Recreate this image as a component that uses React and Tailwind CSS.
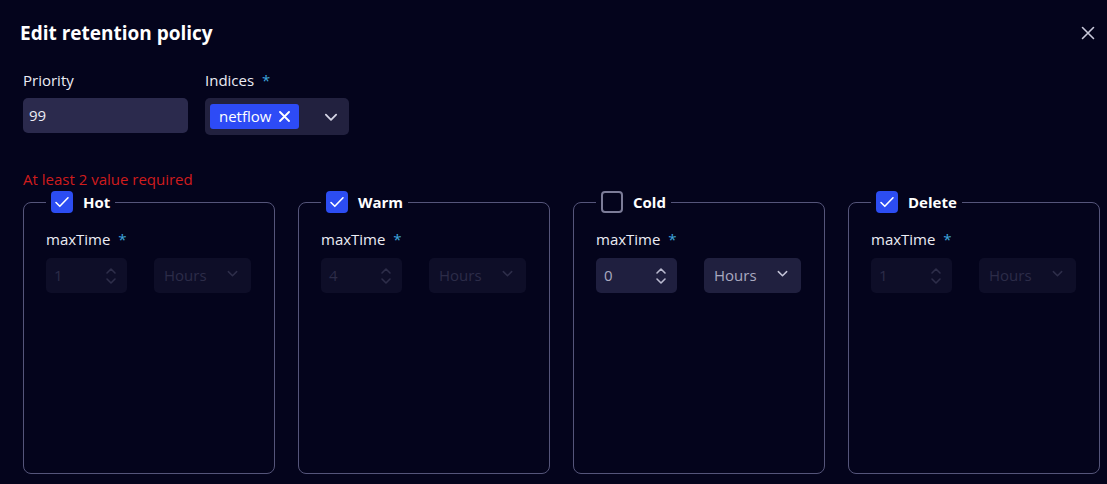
import React from "react";

const font = { fontFamily: "'Open Sans', 'Noto Sans', sans-serif" };

function Check({ checked }) {
  if (checked) {
    return (
      <span className="flex h-[22px] w-[22px] items-center justify-center rounded-[4px] bg-[#2c4df2]">
        <svg width="18" height="18" viewBox="0 0 18 18" fill="none">
          <path d="M3 9.5l3.8 3.8L15 4.8" stroke="white" strokeWidth="1.6" strokeLinecap="round" strokeLinejoin="round" />
        </svg>
      </span>
    );
  }
  return <span className="block h-[22px] w-[22px] rounded-[4px] border-2 border-[#7c7c98]" />;
}

function Spinner({ color }) {
  return (
    <svg width="12" height="22" viewBox="0 0 12 22" fill="none">
      <path d="M2 8l4-4 4 4" stroke={color} strokeWidth="1.6" strokeLinecap="round" strokeLinejoin="round" />
      <path d="M2 14l4 4 4-4" stroke={color} strokeWidth="1.6" strokeLinecap="round" strokeLinejoin="round" />
    </svg>
  );
}

function Chevron({ color, size = 14 }) {
  return (
    <svg width={size} height={size} viewBox="0 0 14 14" fill="none">
      <path d="M2.5 5l4.5 4.5L11.5 5" stroke={color} strokeWidth="1.6" strokeLinecap="round" strokeLinejoin="round" />
    </svg>
  );
}

function Phase({ name, checked, value }) {
  const active = !checked;
  return (
    <fieldset className="h-[283px] rounded-lg border border-[#55557a] px-[22px]">
      <legend className="flex items-center gap-[10px] px-[5px]">
        <Check checked={checked} />
        <span className="text-[15px] font-bold text-white leading-[22px]">{name}</span>
      </legend>
      <div className="mt-[17px] text-[15px] leading-[18px] text-[#ececf4]">
        maxTime <span className="ml-1 text-[#3ea5dc]">*</span>
      </div>
      <div className="mt-[10px] flex gap-[27px]">
        <div
          className={`flex h-[35px] w-[81px] items-center justify-between rounded-[5px] pl-[8px] pr-[10px] text-[15px] ${
            active ? "bg-[#1f1f3f] text-[#a9a9c0]" : "bg-[#0e0e28] text-[#2c2c48]"
          }`}
        >
          <span>{value}</span>
          <Spinner color={active ? "#b9b9cf" : "#2e2e4a"} />
        </div>
        <div
          className={`flex h-[35px] w-[97px] items-center justify-between rounded-[5px] pl-[10px] pr-[12px] text-[15px] ${
            active ? "bg-[#20203f] text-[#a9a9c0]" : "bg-[#0e0e28] text-[#2c2c48]"
          }`}
        >
          <span>Hours</span>
          <span className="-mt-[5px]">
            <Chevron color={active ? "#c4c4d8" : "#2e2e4a"} size={13} />
          </span>
        </div>
      </div>
    </fieldset>
  );
}

export default function App() {
  return (
    <div className="h-[484px] w-[1107px] overflow-hidden bg-[#04041c]" style={font}>
      <div className="flex items-center justify-between pl-[20px] pr-[12px] pt-[21px]">
        <h1 className="text-[19px] font-bold leading-[24px] text-white">Edit retention policy</h1>
        <svg width="14" height="14" viewBox="0 0 14 14" fill="none">
          <path d="M1.5 1.5l11 11M12.5 1.5l-11 11" stroke="#c9c9da" strokeWidth="1.6" strokeLinecap="round" />
        </svg>
      </div>

      <div className="ml-[23px] mt-[26px] flex gap-[17px]">
        <div>
          <div className="text-[15px] leading-[18px] text-[#ececf4]">Priority</div>
          <div className="mt-[9px] flex h-[35px] w-[165px] items-center rounded-[5px] bg-[#2b2a4d] px-[6px] text-[15px] text-[#ececf4]">
            99
          </div>
        </div>
        <div>
          <div className="text-[15px] leading-[18px] text-[#ececf4]">
            Indices <span className="ml-1 text-[#3ea5dc]">*</span>
          </div>
          <div className="mt-[9px] flex h-[37px] w-[144px] items-center justify-between rounded-[5px] bg-[#22213f] pl-[5px] pr-[10px]">
            <span className="flex h-[25px] items-center gap-[8px] rounded-[3px] bg-[#2d4bf6] pl-[9px] pr-[9px] text-[15px] text-white">
              netflow
              <svg width="11" height="11" viewBox="0 0 11 11" fill="none">
                <path d="M1 1l9 9M10 1l-9 9" stroke="white" strokeWidth="1.8" strokeLinecap="round" />
              </svg>
            </span>
            <Chevron color="#d4d4e4" size={16} />
          </div>
        </div>
      </div>

      <div className="ml-[23px] mt-[35px] text-[15px] leading-[18px] text-[#d01c1c]">At least 2 value required</div>

      <div className="ml-[23px] mt-[3px] grid w-[1077px] grid-cols-4 gap-[23px]">
        <Phase name="Hot" checked value="1" />
        <Phase name="Warm" checked value="4" />
        <Phase name="Cold" checked={false} value="0" />
        <Phase name="Delete" checked value="1" />
      </div>
    </div>
  );
}
